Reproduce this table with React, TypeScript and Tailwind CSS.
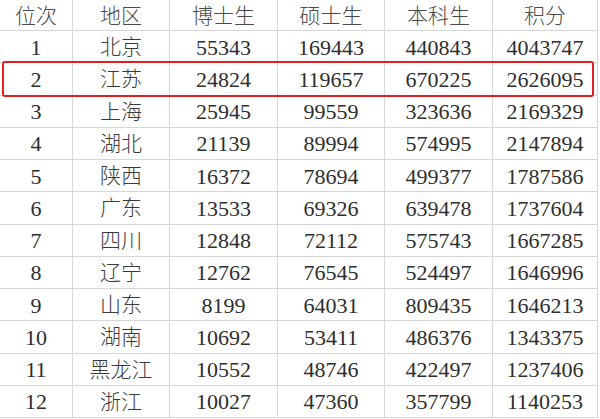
import React from "react";

const HEAD = ["位次", "地区", "博士生", "硕士生", "本科生", "积分"];

const ROWS: (string | number)[][] = [
  [1, "北京", 55343, 169443, 440843, 4043747],
  [2, "江苏", 24824, 119657, 670225, 2626095],
  [3, "上海", 25945, 99559, 323636, 2169329],
  [4, "湖北", 21139, 89994, 574995, 2147894],
  [5, "陕西", 16372, 78694, 499377, 1787586],
  [6, "广东", 13533, 69326, 639478, 1737604],
  [7, "四川", 12848, 72112, 575743, 1667285],
  [8, "辽宁", 12762, 76545, 524497, 1646996],
  [9, "山东", 8199, 64031, 809435, 1646213],
  [10, "湖南", 10692, 53411, 486376, 1343375],
  [11, "黑龙江", 10552, 48746, 422497, 1237406],
  [12, "浙江", 10027, 47360, 357799, 1140253],
];

const cell =
  "flex items-center justify-center border-b border-r border-[#d6d6d6] leading-none";

export default function App() {
  return (
    <div className="relative w-[600px] h-[419px] bg-white overflow-hidden font-['Liberation_Serif','Noto_Sans_CJK_SC',serif] text-[#2e2e2e]">
      <div className="grid grid-cols-[73px_97px_108px_107px_108px_105px] grid-rows-[31px_repeat(12,32.25px)]">
        {HEAD.map((h) => (
          <div key={h} className={`${cell} pt-[3px] text-[21px] text-[#4a4a4a] font-light`}>
            {h}
          </div>
        ))}
        {ROWS.map((r) =>
          r.map((v, i) => (
            <div
              key={`${r[0]}-${i}`}
              className={`${cell} pt-[2px] ${i === 1 ? "text-[21px] font-light text-[#3a3a3a]" : "text-[22px]"}`}
            >
              {v}
            </div>
          ))
        )}
      </div>

      {/* red highlight around 江苏 */}
      <div className="absolute left-[2px] top-[61px] w-[592px] h-[36px] border-2 border-[#e02020] rounded-[3px]" />
    </div>
  );
}
